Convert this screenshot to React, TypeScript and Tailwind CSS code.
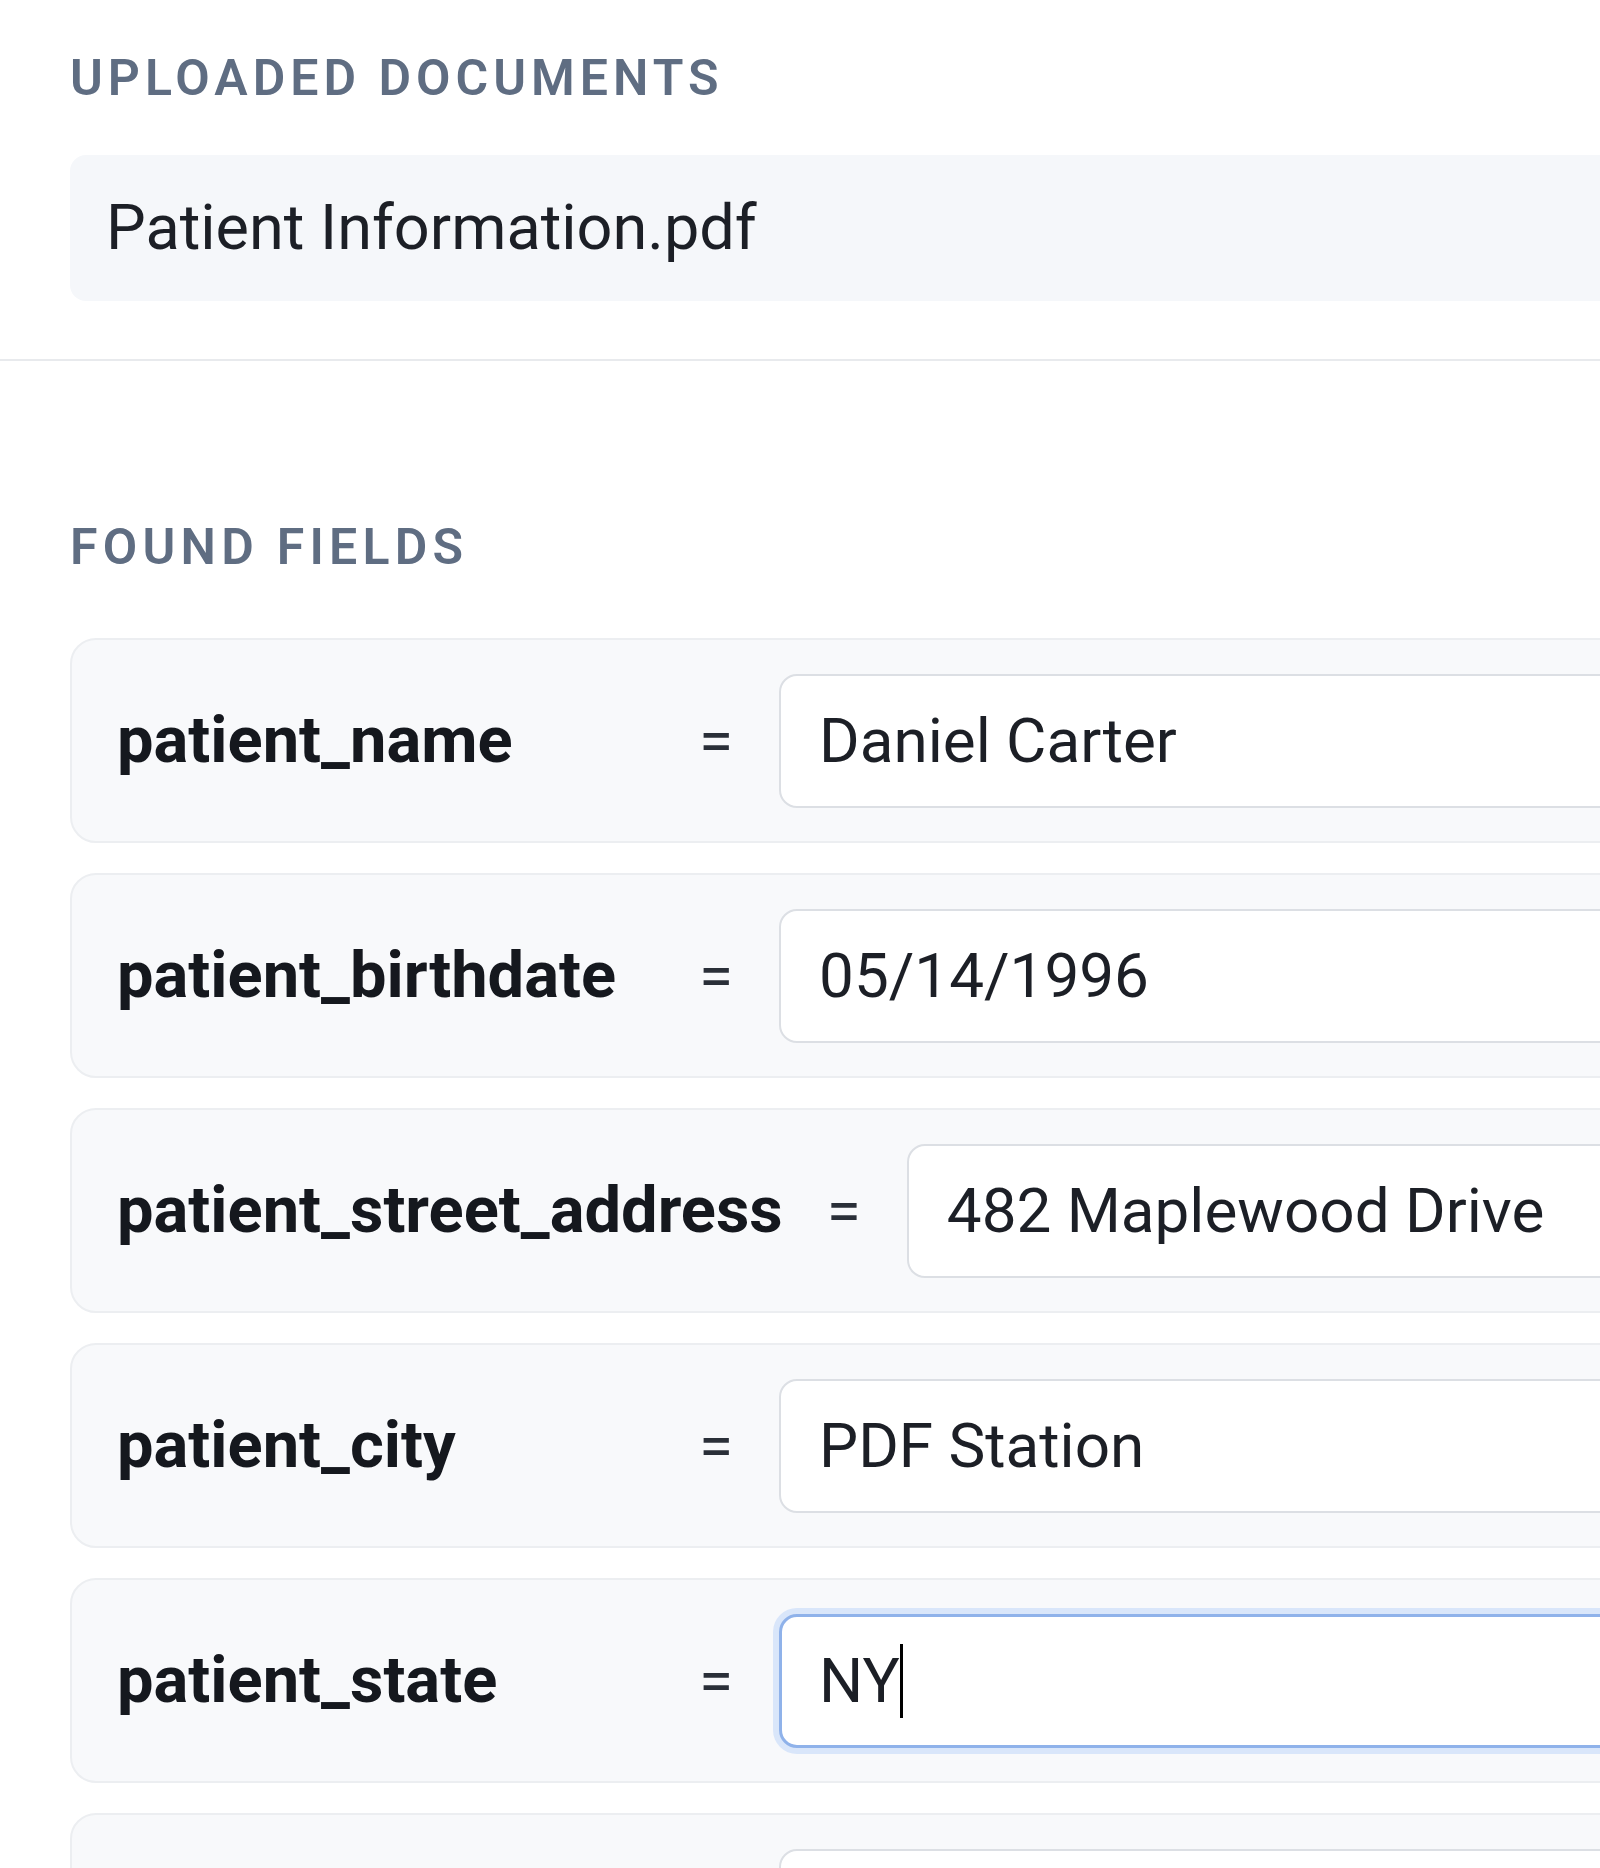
import React from "react";

const fields: { label: string; value: string; focused?: boolean }[] = [
  { label: "patient_name", value: "Daniel Carter" },
  { label: "patient_birthdate", value: "05/14/1996" },
  { label: "patient_street_address", value: "482 Maplewood Drive" },
  { label: "patient_city", value: "PDF Station" },
  { label: "patient_state", value: "NY", focused: true },
  { label: "", value: "" },
];

export default function App() {
  return (
    <div
      className="w-[1600px] h-[1868px] overflow-hidden bg-white"
      style={{ fontFamily: "Roboto, 'Noto Sans', sans-serif" }}
    >
      <div className="w-[2000px]">
        <div className="pl-[70px] pt-[52px] pb-[58px]">
          <h2 className="text-[50px] leading-[52px] font-semibold uppercase tracking-[0.1em] text-[#5f6d82]">
            Uploaded Documents
          </h2>
          <div className="mt-[51px] h-[146px] rounded-[16px] bg-[#f5f7fa] flex items-center pl-[36px] text-[63px] text-[#1c1f26]">
            Patient Information.pdf
          </div>
        </div>
        <div className="h-[2px] bg-[#e8eaed]" />
        <div className="pl-[70px] pt-[160px]">
          <h2 className="text-[50px] leading-[52px] font-semibold uppercase tracking-[0.105em] text-[#5f6d82]">
            Found Fields
          </h2>
          <div className="mt-[65px] flex flex-col gap-[30px]">
            {fields.map((f, i) => (
              <div
                key={i}
                className="h-[205px] rounded-[26px] border-2 border-[#eceef1] bg-[#f8f9fb] flex items-center pl-[45px]"
              >
                <div className="min-w-[538px] text-[65px] font-bold text-[#15181e]">
                  {f.label}
                </div>
                <div
                  className={
                    f.label
                      ? "ml-[44px] text-[62px] text-[#2a2f38]"
                      : "ml-[44px] text-[62px] text-[#2a2f38] invisible"
                  }
                >
                  =
                </div>
                <div
                  className={
                    f.focused
                      ? "ml-[46px] flex-1 h-[134px] rounded-[18px] border-[3px] border-[#8fb2ea] bg-white ring-[6px] ring-[#d9e6fa] flex items-center pl-[37px] text-[62px] text-[#1c1f26]"
                      : "ml-[46px] flex-1 h-[134px] rounded-[18px] border-2 border-[#dcdfe4] bg-white flex items-center pl-[38px] text-[62px] text-[#1c1f26]"
                  }
                >
                  <span>{f.value}</span>
                  {f.focused && <span className="inline-block w-[3px] h-[74px] bg-black" />}
                </div>
              </div>
            ))}
          </div>
        </div>
      </div>
    </div>
  );
}
